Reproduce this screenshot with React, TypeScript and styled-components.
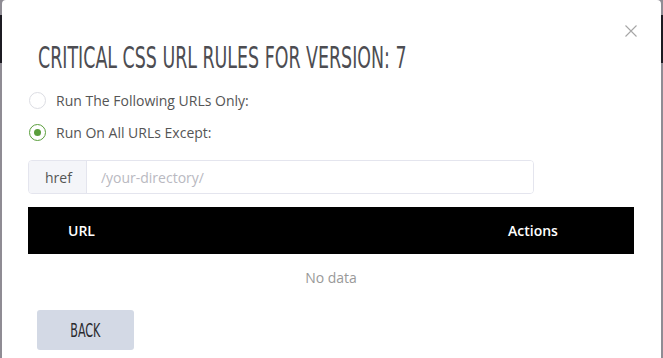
import React, { useState } from 'react';
import styled, { createGlobalStyle } from 'styled-components';

const GlobalStyle = createGlobalStyle`
	html, body {
		margin: 0;
		padding: 0;
	}
	body {
		font-family: 'Open Sans', 'Liberation Sans', sans-serif;
		background: #8f8c94;
	}
`;

const Backdrop = styled.div`
	height: 358px;
	overflow: hidden;
	padding: 0 2px;
	background: linear-gradient(to bottom, #8f8c94 0, #8f8c94 15px, #1c1b22 15px, #1c1b22 63px, #8f8c94 63px);
`;

const Modal = styled.div`
	position: relative;
	height: 100%;
	background: #fff;
	border-radius: 4px 4px 0 0;
	padding: 0 27px 0 26px;
	box-sizing: border-box;
`;

const CloseButton = styled.button`
	position: absolute;
	top: 22px;
	right: 21px;
	width: 18px;
	height: 18px;
	padding: 0;
	border: none;
	background: transparent;
	cursor: pointer;
	display: flex;
	align-items: center;
	justify-content: center;
`;

const Title = styled.h3`
	margin: 0;
	padding: 39px 0 0 10px;
	height: 82px;
	box-sizing: border-box;
	font-family: 'DejaVu Sans Condensed', 'DejaVu Sans', sans-serif;
	font-weight: normal;
	font-size: 31px;
	line-height: 36px;
	color: #4d4d52;
	white-space: nowrap;

	span {
		display: inline-block;
		transform: scaleX(0.625);
		transform-origin: left center;
	}
`;

const RadioList = styled.div`
	display: flex;
	flex-direction: column;
	gap: 12px;
	padding-top: 8px;
`;

const RadioRow = styled.label`
	display: flex;
	align-items: center;
	gap: 10px;
	height: 20px;
	padding-left: 1px;
	font-size: 14px;
	color: #555;
	cursor: pointer;
`;

const RadioCircle = styled.span<{ $checked: boolean }>`
	width: 15px;
	height: 15px;
	border-radius: 50%;
	border: 1px solid ${(p) => (p.$checked ? '#5a9e3c' : '#dcdde3')};
	display: flex;
	align-items: center;
	justify-content: center;

	&::after {
		content: '';
		width: 7px;
		height: 7px;
		border-radius: 50%;
		background: #5a9e3c;
		display: ${(p) => (p.$checked ? 'block' : 'none')};
	}
`;

const InputGroup = styled.div`
	margin-top: 18px;
	width: 506px;
	height: 34px;
	display: flex;
	border: 1px solid #e4e5ee;
	border-radius: 4px;
	box-sizing: border-box;
	overflow: hidden;
`;

const Addon = styled.span`
	padding: 0 14px 0 16px;
	display: flex;
	align-items: center;
	background: #f4f5f9;
	border-right: 1px solid #e4e5ee;
	font-size: 14px;
	color: #555;
`;

const Input = styled.input`
	flex: 1;
	border: none;
	outline: none;
	padding: 0 14px;
	font-family: 'Open Sans', 'Liberation Sans', sans-serif;
	font-size: 14px;
	color: #555;

	&::placeholder {
		color: #b9b9c1;
	}
`;

const Table = styled.div`
	margin-top: 13px;
`;

const HeadRow = styled.div`
	display: grid;
	grid-template-columns: 1fr 126px;
	align-items: center;
	height: 47px;
	padding-left: 40px;
	background: #000;
	color: #fff;
	font-size: 14px;
	font-weight: 600;
`;

const Empty = styled.div`
	height: 46px;
	display: flex;
	align-items: center;
	justify-content: center;
	font-size: 14px;
	color: #999;
`;

const Footer = styled.div`
	padding: 10px 0 0 9px;
`;

const BackButton = styled.button`
	width: 97px;
	height: 40px;
	border: none;
	border-radius: 3px;
	background: #d3d9e5;
	color: #2a2a2e;
	font-family: 'DejaVu Sans Condensed', 'DejaVu Sans', sans-serif;
	font-size: 20px;
	cursor: pointer;

	span {
		display: inline-block;
		transform: scaleX(0.62);
	}
`;

const options = ['Run The Following URLs Only:', 'Run On All URLs Except:'];

export default function App() {
	const [selected, setSelected] = useState(1);

	return (
		<>
			<GlobalStyle />
			<Backdrop>
				<Modal>
					<CloseButton aria-label="Close">
						<svg width="12" height="12" viewBox="0 0 12 12" fill="none" stroke="#a6a6a6" strokeWidth="1.1">
							<path d="M0.5 0.5l11 11M11.5 0.5l-11 11" />
						</svg>
					</CloseButton>
					<Title>
						<span>CRITICAL CSS URL RULES FOR VERSION: 7</span>
					</Title>
					<RadioList>
						{options.map((text, i) => (
							<RadioRow key={text} onClick={() => setSelected(i)}>
								<RadioCircle $checked={selected === i} />
								{text}
							</RadioRow>
						))}
					</RadioList>
					<InputGroup>
						<Addon>href</Addon>
						<Input placeholder="/your-directory/" />
					</InputGroup>
					<Table>
						<HeadRow>
							<span>URL</span>
							<span>Actions</span>
						</HeadRow>
						<Empty>No data</Empty>
					</Table>
					<Footer>
						<BackButton>
							<span>BACK</span>
						</BackButton>
					</Footer>
				</Modal>
			</Backdrop>
		</>
	);
}
